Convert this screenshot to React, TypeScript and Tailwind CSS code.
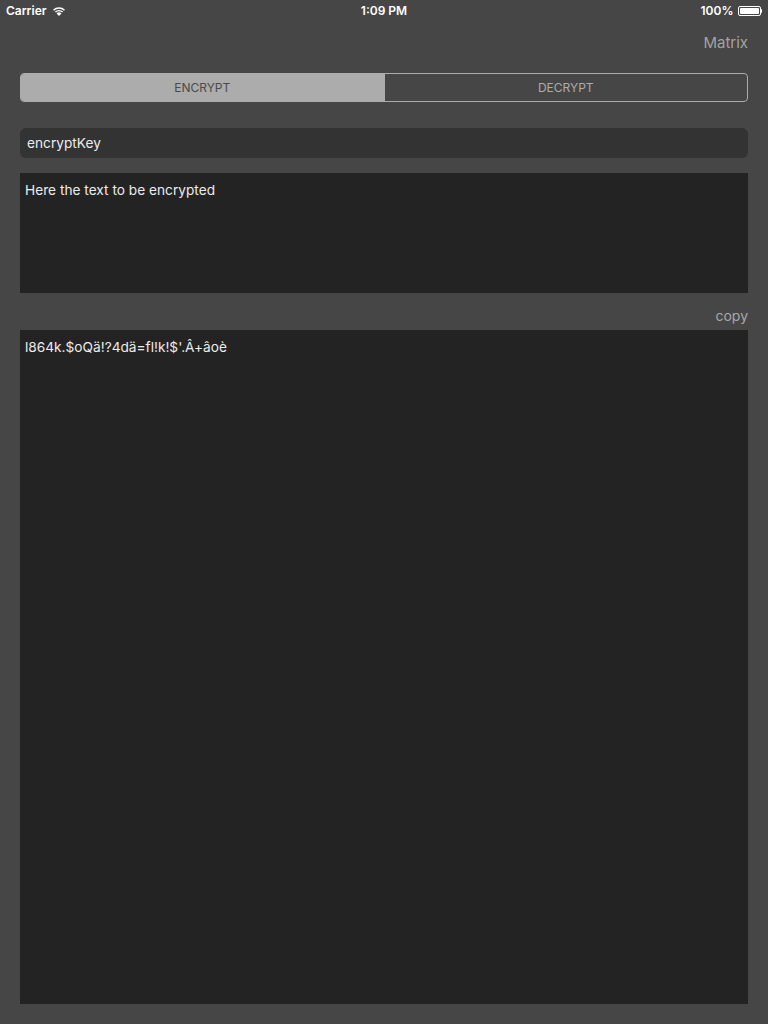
import { useState } from "react";

const FONT = { fontFamily: 'Inter, "Liberation Sans", Arial, sans-serif' };

function StatusBar() {
	return (
		<div className="relative flex h-5 items-center justify-between px-[6px] pt-px text-[12px] font-semibold text-white">
			<div className="flex items-center gap-[5px]">
				<span>Carrier</span>
				<svg width="14" height="10" viewBox="0 0 14 10" fill="white">
					<path d="M7 10 L4.6 7.4 A3.4 3.4 0 0 1 9.4 7.4 Z" />
					<path d="M2.9 5.6 A5.9 5.9 0 0 1 11.1 5.6 L10.1 6.6 A4.5 4.5 0 0 0 3.9 6.6 Z" />
					<path d="M1 3.7 A8.6 8.6 0 0 1 13 3.7 L12 4.7 A7.2 7.2 0 0 0 2 4.7 Z" />
				</svg>
			</div>
			<span className="absolute left-1/2 -translate-x-1/2">1:09 PM</span>
			<div className="flex items-center gap-[4px]">
				<span>100%</span>
				<div className="flex items-center">
					<div className="h-[10px] w-[23px] rounded-[2px] border border-white p-[1px]">
						<div className="h-full w-full rounded-[1px] bg-white" />
					</div>
					<div className="h-[4px] w-[1.5px] rounded-r-sm bg-white" />
				</div>
			</div>
		</div>
	);
}

export default function App() {
	const [mode, setMode] = useState<"encrypt" | "decrypt">("encrypt");

	return (
		<div className="flex h-[1024px] w-[768px] flex-col bg-[#464646]" style={FONT}>
			<StatusBar />

			{/* Nav */}
			<div className="flex h-[44px] items-center justify-end px-[20px] pt-[2px]">
				<span className="text-[15px] text-[#a3a3a3]">Matrix</span>
			</div>

			<div className="flex flex-1 flex-col px-[20px] pb-[20px] pt-[9px]">
				{/* Segmented control */}
				<div className="flex h-[29px] overflow-hidden rounded-[4px] border border-[#acacac] text-[12px]">
					<button
						type="button"
						onClick={() => setMode("encrypt")}
						className={
							mode === "encrypt"
								? "flex flex-1 items-center justify-center bg-[#acacac] text-[#4a4a4a]"
								: "flex flex-1 items-center justify-center text-[#acacac]"
						}
					>
						ENCRYPT
					</button>
					<div className="w-px bg-[#acacac]" />
					<button
						type="button"
						onClick={() => setMode("decrypt")}
						className={
							mode === "decrypt"
								? "flex flex-1 items-center justify-center bg-[#acacac] text-[#4a4a4a]"
								: "flex flex-1 items-center justify-center text-[#acacac]"
						}
					>
						DECRYPT
					</button>
				</div>

				{/* Key field */}
				<div className="mt-[26px] flex h-[30px] items-center rounded-[6px] bg-[#333333] px-[7px] text-[13.7px] text-[#ececec]">
					encryptKey
				</div>

				{/* Input */}
				<div className="mt-[15px] h-[120px] bg-[#232323] px-[5px] pt-[8px] text-[13.7px] leading-[18px] text-[#ececec]">
					Here the text to be encrypted
				</div>

				{/* Copy */}
				<div className="flex h-[37px] items-end justify-end pb-[5px]">
					<span className="text-[14px] leading-[18px] text-[#a8a8a8]">copy</span>
				</div>

				{/* Output */}
				<div className="flex-1 bg-[#232323] px-[5px] pt-[8px] text-[13.7px] leading-[18px] text-[#ececec]">
					l864k.$oQä!?4dä=fl!k!$'.Â+âoè
				</div>
			</div>
		</div>
	);
}
